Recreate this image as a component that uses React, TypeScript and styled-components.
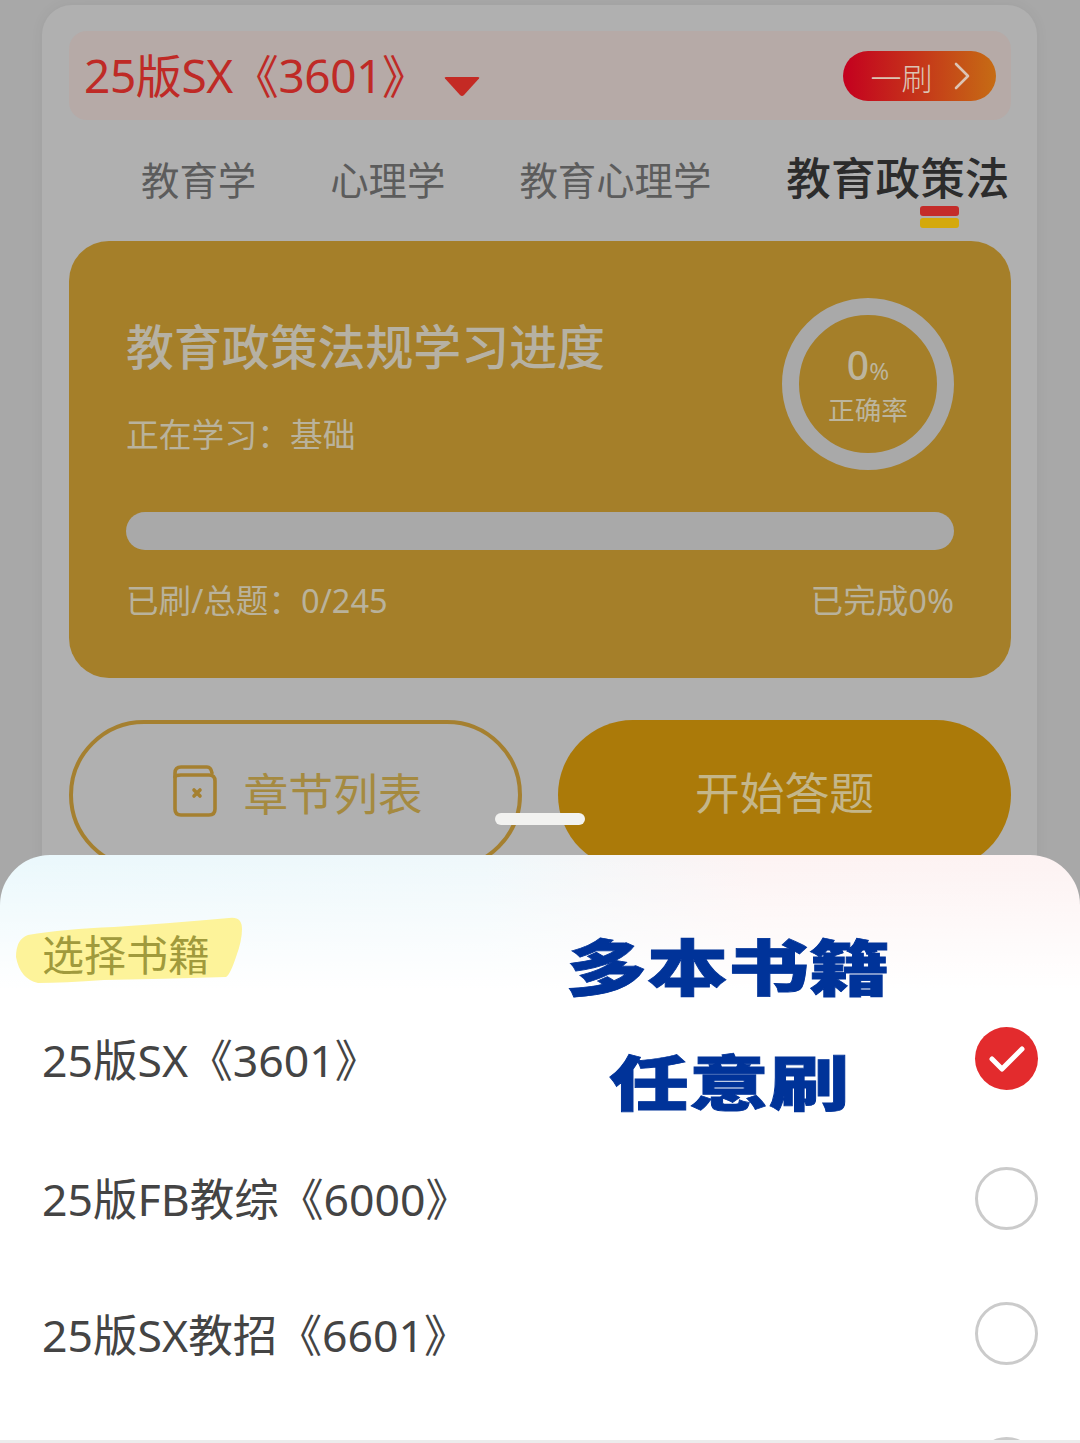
import React from 'react';
import styled, { createGlobalStyle } from 'styled-components';

const GlobalStyle = createGlobalStyle`
  html, body {
    margin: 0;
    padding: 0;
    background: #a9a9a9;
    font-family: "Noto Sans", "Noto Sans CJK SC", sans-serif;
  }
`;

const Page = styled.div`
  width: 1080px;
  height: 1443px;
  position: relative;
  overflow: hidden;
  background: #a8a8a8;
  padding: 5px 43px 0 42px;
  box-sizing: border-box;
`;

const Card = styled.div`
  height: 1200px;
  background: #b0b0b0;
  border-radius: 30px 30px 0 0;
  padding: 26px 26px 0 27px;
  box-sizing: border-box;
  box-shadow: 0 0 14px rgba(0, 0, 0, 0.05);
`;

const Banner = styled.div`
  height: 89px;
  border-radius: 18px;
  background: #b6aaa7;
  display: flex;
  align-items: center;
  padding: 0 15px;
`;

const BookName = styled.div`
  font-size: 46px;
  line-height: 89px;
  color: #bf2a26;
  letter-spacing: -0.4px;
  white-space: nowrap;
  margin-top: 0;
`;

const Caret = styled.svg`
  width: 36px;
  height: 20px;
  margin: 22px 0 0 16px;
`;

const BrushButton = styled.div`
  margin-left: auto;
  width: 153px;
  height: 50px;
  margin-top: 1px;
  border-radius: 25px;
  background: linear-gradient(90deg, #c4001f 0%, #c66c14 100%);
  color: #dcc4b4;
  display: flex;
  align-items: center;
  justify-content: center;
  gap: 20px;
  font-size: 31px;
  font-weight: 300;
  box-sizing: border-box;
  padding-left: 2px;
`;

const Tabs = styled.div`
  display: flex;
  align-items: flex-start;
  height: 121px;
  padding-left: 72px;
`;

const Tab = styled.div<{ $active?: boolean; $gap?: number }>`
  position: relative;
  font-size: ${p => (p.$active ? '44.6px' : '38.4px')};
  font-weight: ${p => (p.$active ? 500 : 400)};
  color: ${p => (p.$active ? '#2c2c2c' : '#5c5c5c')};
  line-height: 60px;
  margin-top: ${p => (p.$active ? '28px' : '30px')};
  margin-left: ${p => p.$gap ?? 0}px;
  white-space: nowrap;
`;

const TabMark = styled.span`
  position: absolute;
  left: 134px;
  top: 58px;
  width: 39px;
  height: 22px;
  display: flex;
  flex-direction: column;
  justify-content: space-between;

  &::before,
  &::after {
    content: '';
    height: 10px;
    border-radius: 3px;
    background: #c42c2a;
  }

  &::after {
    background: #d4a90c;
  }
`;

const ProgressCard = styled.div`
  height: 437px;
  border-radius: 40px;
  background: #a57f29;
  padding: 57px 57px 0 57px;
  box-sizing: border-box;
`;

const ProgressTop = styled.div`
  display: flex;
  justify-content: space-between;
  height: 214px;
`;

const ProgressTitle = styled.div`
  font-size: 47.9px;
  font-weight: 500;
  line-height: 72px;
  color: #b6b1a3;
  white-space: nowrap;
  margin-top: 13px;
`;

const Studying = styled.div`
  font-size: 32.8px;
  font-weight: 400;
  line-height: 48px;
  color: #b9b29c;
  margin-top: 28px;
  white-space: nowrap;
`;

const Ring = styled.div`
  width: 172px;
  height: 172px;
  border: 17px solid #a9a9a9;
  border-radius: 50%;
  box-sizing: border-box;
  display: flex;
  flex-direction: column;
  align-items: center;
  justify-content: center;
  color: #bcb59e;
  font-weight: 400;
`;

const Percent = styled.div`
  font-size: 39px;
  font-weight: 500;
  line-height: 46px;
  margin-top: 2px;

  small {
    font-size: 24px;
    font-weight: 400;
  }
`;

const RingLabel = styled.div`
  font-size: 26.6px;
  line-height: 36px;
  white-space: nowrap;
  margin-top: -2px;
`;

const Bar = styled.div`
  height: 38px;
  border-radius: 19px;
  background: #a9a9a9;
`;

const ProgressFoot = styled.div`
  display: flex;
  justify-content: space-between;
  margin-top: 27px;
  font-size: 32.6px;
  font-weight: 400;
  line-height: 48px;
  color: #b9b29c;
  white-space: nowrap;
`;

const Actions = styled.div`
  display: flex;
  justify-content: space-between;
  margin-top: 42px;
`;

const ActionButton = styled.div<{ $solid?: boolean }>`
  width: ${p => (p.$solid ? '453px' : '453px')};
  height: 150px;
  border-radius: 75px;
  box-sizing: border-box;
  border: ${p => (p.$solid ? 'none' : '4px solid #a58030')};
  background: ${p => (p.$solid ? '#ab7a09' : 'transparent')};
  color: ${p => (p.$solid ? '#c4b68a' : '#a58a40')};
  display: flex;
  align-items: center;
  justify-content: center;
  gap: 26px;
  font-size: 44.8px;
  font-weight: 400;
  padding: ${p => (p.$solid ? '0 0 10px' : '0 0 8px 5px')};
`;

const Handle = styled.div`
  position: absolute;
  left: 495px;
  top: 813px;
  width: 90px;
  height: 12px;
  border-radius: 6px;
  background: #f2f2f0;
`;

const Sheet = styled.div`
  position: absolute;
  left: 0;
  right: 0;
  bottom: 0;
  height: 588px;
  border-radius: 50px 50px 0 0;
  overflow: hidden;
  background:
    linear-gradient(180deg, rgba(255, 255, 255, 0) 0%, #fff 135px),
    linear-gradient(90deg, #eaf8fc 0%, #eff8fb 45%, #fdf3f3 70%, #fdf2f2 100%);
`;

const SheetHead = styled.div`
  position: relative;
  height: 132px;
  padding: 69px 0 0 42px;
  box-sizing: border-box;
`;

const Highlight = styled.svg`
  position: absolute;
  left: 14px;
  top: 62px;
  width: 230px;
  height: 68px;
`;

const SheetTitle = styled.div`
  position: relative;
  font-size: 42px;
  font-weight: 400;
  line-height: 62px;
  color: #a09a3c;
`;

const BookRow = styled.div<{ $h: number }>`
  height: ${p => p.$h}px;
  display: flex;
  align-items: center;
  justify-content: space-between;
  padding: 0 42px;
`;

const BookLabel = styled.div`
  font-size: 44.6px;
  font-weight: 400;
  line-height: 60px;
  color: #444;
  white-space: nowrap;
  margin-top: 2px;
`;

const Radio = styled.div<{ $checked?: boolean }>`
  width: 63px;
  height: 63px;
  border-radius: 50%;
  box-sizing: border-box;
  flex: none;
  border: ${p => (p.$checked ? 'none' : '3px solid #cbcbcb')};
  background: ${p => (p.$checked ? '#e32b2d' : '#fff')};
  display: flex;
  align-items: center;
  justify-content: center;
  margin-left: auto;
`;

const FootLine = styled.div`
  position: absolute;
  left: 0;
  right: 0;
  bottom: 0;
  height: 3px;
  background: #ececec;
`;

const Callout = styled.div<{ $left: number; $top: number; $size: number }>`
  position: absolute;
  left: ${p => p.$left}px;
  top: ${p => p.$top}px;
  font-size: ${p => p.$size}px;
  line-height: 80px;
  font-weight: 900;
  font-family: "Noto Sans CJK SC", sans-serif;
  color: #003399;
  -webkit-text-stroke: 1px #003399;
  white-space: nowrap;
  transform: scaleY(0.76);
  transform-origin: center;
`;

const books = [
  { name: '25版SX《3601》', checked: true, height: 143 },
  { name: '25版FB教综《6000》', height: 136 },
  { name: '25版SX教招《6601》', height: 135 },
  { name: '', height: 135 },
];

const App: React.FC = () => {
  return (
    <Page>
      <GlobalStyle />
      <Card>
        <Banner>
          <BookName>25版SX《3601》</BookName>
          <Caret viewBox="0 0 36 20">
            <path d="M1 1.5 Q0 0 2 0 H34 Q36 0 35 1.5 L20 18 Q18 20 16 18 Z" fill="#c42a24" />
          </Caret>
          <BrushButton>
            <span>一刷</span>
            <svg width="18" height="28" viewBox="0 0 18 28" fill="none">
              <path d="M3 2 L15 14 L3 26" stroke="#dcc4b4" strokeWidth="2.6" strokeLinecap="round" strokeLinejoin="round" />
            </svg>
          </BrushButton>
        </Banner>
        <Tabs>
          <Tab>教育学</Tab>
          <Tab $gap={74}>心理学</Tab>
          <Tab $gap={74}>教育心理学</Tab>
          <Tab $active $gap={75}>
            教育政策法
            <TabMark />
          </Tab>
        </Tabs>
        <ProgressCard>
          <ProgressTop>
            <div>
              <ProgressTitle>教育政策法规学习进度</ProgressTitle>
              <Studying>正在学习：基础</Studying>
            </div>
            <Ring>
              <Percent>
                0<small>%</small>
              </Percent>
              <RingLabel>正确率</RingLabel>
            </Ring>
          </ProgressTop>
          <Bar />
          <ProgressFoot>
            <span>已刷/总题：0/245</span>
            <span>已完成0%</span>
          </ProgressFoot>
        </ProgressCard>
        <Actions>
          <ActionButton>
            <svg width="44" height="52" viewBox="0 0 44 52" fill="none" stroke="#a58030" strokeWidth="3.6" strokeLinecap="round" strokeLinejoin="round">
              <path d="M2 12 V44 Q2 50 8 50 H36 Q42 50 42 44 V16 Q42 10 36 10 H8 Q2 10 2 12 Z" />
              <path d="M2 12 V8 Q2 2 8 2 H34 Q38 2 39 8" />
              <path d="M21 25 L27 31 M27 25 L21 31" />
            </svg>
            <span>章节列表</span>
          </ActionButton>
          <ActionButton $solid>开始答题</ActionButton>
        </Actions>
      </Card>
      <Handle />
      <Sheet>
        <SheetHead>
          <Highlight viewBox="0 0 230 68">
            <path
              d="M2 40 Q2 22 14 18 Q50 12 100 10 Q160 6 215 1 Q228 -1 228 12 Q228 24 222 40 Q216 58 212 60 Q150 62 90 63 Q50 66 24 66 Q6 62 2 40 Z"
              fill="#fdf39a"
            />
          </Highlight>
          <SheetTitle>选择书籍</SheetTitle>
        </SheetHead>
        {books.map(book => (
          <BookRow key={book.name || 'more'} $h={book.height}>
            {book.name && <BookLabel>{book.name}</BookLabel>}
            <Radio $checked={book.checked}>
              {book.checked && (
                <svg width="36" height="28" viewBox="0 0 36 28" fill="none">
                  <path d="M3 14 L13 24 L33 4" stroke="#fff" strokeWidth="5" strokeLinecap="round" strokeLinejoin="round" />
                </svg>
              )}
            </Radio>
          </BookRow>
        ))}
        <FootLine />
      </Sheet>
      <Callout $left={566} $top={924} $size={81}>多本书籍</Callout>
      <Callout $left={609} $top={1039} $size={80}>任意刷</Callout>
    </Page>
  );
};

export default App;
